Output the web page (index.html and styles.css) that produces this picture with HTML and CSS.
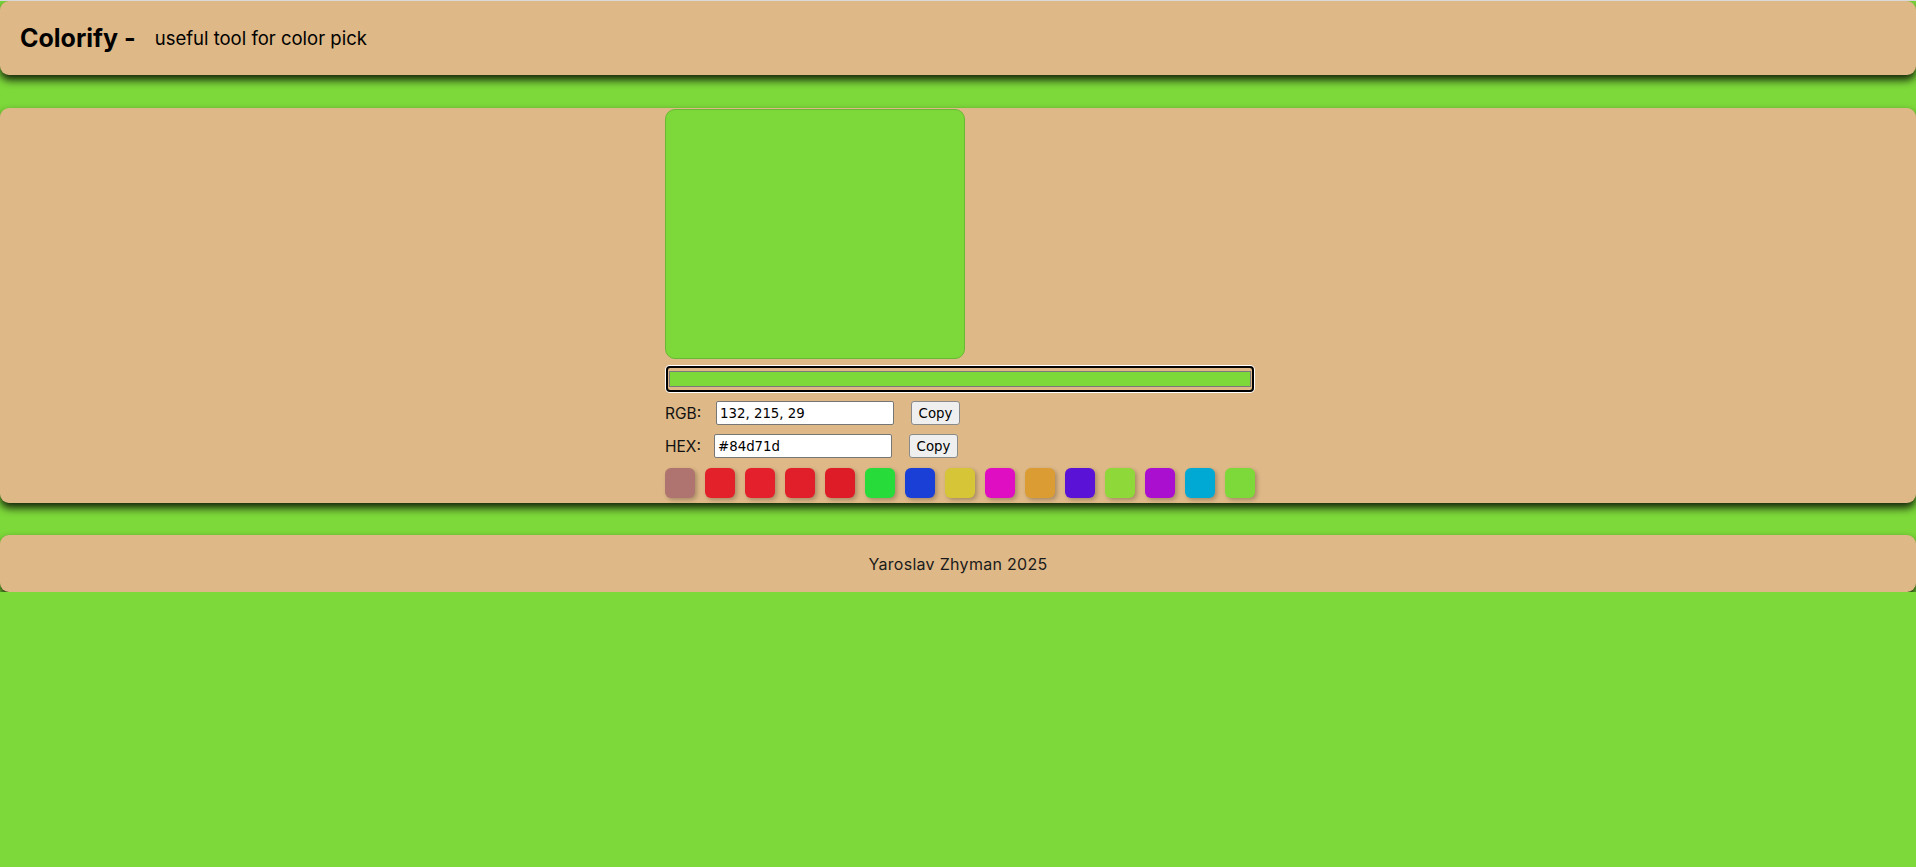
FILE: index.html
```html
<!DOCTYPE html>
<html lang="en">
<head>
<meta charset="utf-8">
<title>Colorify</title>
<link rel="stylesheet" href="styles.css">
</head>
<body>
<header class="header">
  <h1 class="logo">Colorify -</h1>
  <p class="tagline">useful tool for color pick</p>
</header>
<main class="card main">
  <div class="picker">
    <div class="preview"></div>
    <div class="colorbar"><div class="colorbar-fill"></div></div>
    <div class="row">
      <label class="label" for="rgb">RGB:</label>
      <input class="field" id="rgb" type="text" value="132, 215, 29">
      <button class="copy" type="button">Copy</button>
    </div>
    <div class="row row-hex">
      <label class="label" for="hex">HEX:</label>
      <input class="field" id="hex" type="text" value="#84d71d">
      <button class="copy" type="button">Copy</button>
    </div>
    <div class="swatches">
      <span class="swatch" style="background:#b07470"></span>
      <span class="swatch" style="background:#e2212b"></span>
      <span class="swatch" style="background:#e3202b"></span>
      <span class="swatch" style="background:#e01f2a"></span>
      <span class="swatch" style="background:#de1c27"></span>
      <span class="swatch" style="background:#27dc3a"></span>
      <span class="swatch" style="background:#1a3fd6"></span>
      <span class="swatch" style="background:#d6c536"></span>
      <span class="swatch" style="background:#df0ec3"></span>
      <span class="swatch" style="background:#db9c33"></span>
      <span class="swatch" style="background:#5a12d6"></span>
      <span class="swatch" style="background:#8ed83a"></span>
      <span class="swatch" style="background:#aa0fd0"></span>
      <span class="swatch" style="background:#00a8d4"></span>
      <span class="swatch" style="background:#7dd93a"></span>
    </div>
  </div>
</main>
<footer class="card footer">
  <p class="credit">Yaroslav Zhyman 2025</p>
</footer>
</body>
</html>
```

FILE: styles.css
```css
html {
  border-top: 1px solid #d9d9d9;
}

body {
  margin: 0;
  background: #7dd93a;
  font-family: Inter, "Noto Sans", sans-serif;
  color: #111;
}

.header,
.card {
  background: #deb887;
  border-radius: 9px;
  box-shadow: 0 5px 9px rgba(0, 0, 0, 0.85);
}

.header {
  height: 74px;
  display: flex;
  align-items: center;
  padding-left: 20px;
  box-sizing: border-box;
}

.logo {
  margin: 0;
  font-size: 25px;
  font-weight: 700;
  color: #000;
}

.tagline {
  margin: 0 0 0 19px;
  font-size: 18.5px;
  color: #000;
}

.main {
  margin-top: 33px;
  padding-left: 4px;
  display: flex;
  justify-content: center;
}

.picker {
  width: 590px;
  padding: 1px 0 5px;
  display: flex;
  flex-direction: column;
  align-items: flex-start;
}

.preview {
  width: 300px;
  height: 250px;
  box-sizing: border-box;
  background: #7dd93a;
  border: 1px solid #69b834;
  border-radius: 10px;
}

.colorbar {
  margin: 7px 1px 0;
  width: 588px;
  height: 26px;
  box-sizing: border-box;
  border: 2px solid #000;
  border-radius: 4px;
  box-shadow: 0 0 0 1px #fff;
  padding: 3px 1px;
  background: #deb887;
}

.colorbar-fill {
  height: 100%;
  box-sizing: border-box;
  border: 1px solid #7a7a7a;
  background: #7dd93a;
}

.row {
  margin-top: 9px;
  display: flex;
  align-items: center;
}

.row-hex .label {
  width: 33px;
}

.label {
  width: 35px;
  margin-right: 16px;
  font-size: 15.5px;
  color: #111;
}

.field {
  width: 178px;
  height: 24px;
  box-sizing: border-box;
  margin: 0 17px 0 0;
  padding: 1px 3px;
  border: 1px solid #767676;
  border-radius: 2px;
  background: #fff;
  font-family: "DejaVu Sans", sans-serif;
  font-size: 13.33px;
  color: #000;
}

.copy {
  width: 49px;
  height: 24px;
  box-sizing: border-box;
  padding: 0;
  border: 1px solid #8a8a8a;
  border-radius: 3px;
  background: #efefef;
  font-family: "DejaVu Sans", sans-serif;
  font-size: 13.33px;
  color: #000;
}

.swatches {
  margin-top: 10px;
  display: flex;
  gap: 10px;
}

.swatch {
  width: 30px;
  height: 30px;
  border-radius: 6px;
  box-shadow: 2px 2px 4px rgba(0, 0, 0, 0.25);
}

.footer {
  margin-top: 32px;
  height: 57px;
  display: flex;
  align-items: center;
  justify-content: center;
}

.credit {
  margin: 0;
  font-size: 16px;
  color: #1a1a1a;
  letter-spacing: 0.3px;
}
```
